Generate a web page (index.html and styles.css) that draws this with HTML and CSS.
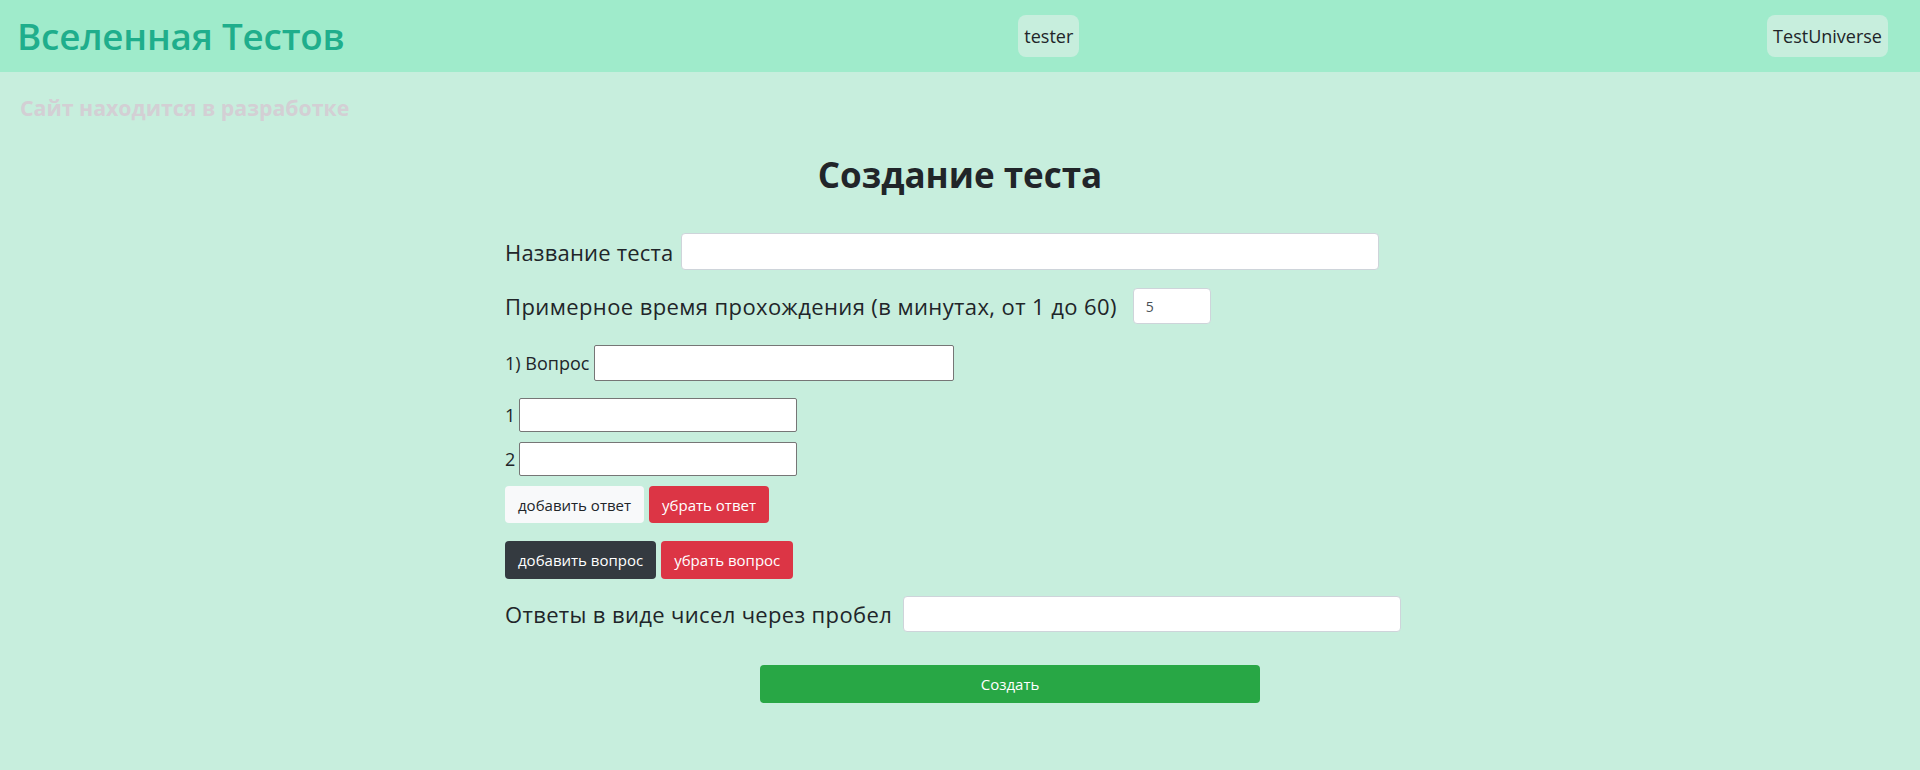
FILE: index.html
```html
<!DOCTYPE html>
<html lang="ru">
<head>
<meta charset="utf-8">
<title>Вселенная Тестов</title>
<link rel="stylesheet" href="styles.css">
</head>
<body>
<header class="topbar">
  <div class="logo">Вселенная Тестов</div>
  <a class="nav-btn nav-user">tester</a>
  <a class="nav-btn nav-home">TestUniverse</a>
</header>
<main class="page">
  <div class="notice">Сайт находится в разработке</div>
  <h2 class="title">Создание теста</h2>
  <form class="test-form">
    <div class="row name-row">
      <label class="big-label">Название теста</label>
      <input class="form-control name-input" type="text">
    </div>
    <div class="row time-row">
      <label class="big-label">Примерное время прохождения (в минутах, от 1 до 60)</label>
      <input class="form-control time-input" type="text" value="5">
    </div>
    <div class="row question-row">
      <label class="small-label">1) Вопрос</label>
      <input class="plain-input question-input" type="text">
    </div>
    <div class="answers">
      <div class="answer-row">
        <span class="small-label num">1</span>
        <input class="plain-input answer-input" type="text">
      </div>
      <div class="answer-row">
        <span class="small-label num">2</span>
        <input class="plain-input answer-input" type="text">
      </div>
    </div>
    <div class="btn-row answers-btns">
      <button type="button" class="btn btn-light">добавить ответ</button>
      <button type="button" class="btn btn-danger">убрать ответ</button>
    </div>
    <div class="btn-row question-btns">
      <button type="button" class="btn btn-dark">добавить вопрос</button>
      <button type="button" class="btn btn-danger">убрать вопрос</button>
    </div>
    <div class="row key-row">
      <label class="big-label">Ответы в виде чисел через пробел</label>
      <input class="form-control key-input" type="text">
    </div>
    <div class="submit-row">
      <button type="button" class="btn btn-success submit">Создать</button>
    </div>
  </form>
</main>
</body>
</html>
```
FILE: styles.css
```css
* { box-sizing: border-box; }
html, body { margin: 0; padding: 0; }
body {
  font-family: "Open Sans", "Noto Sans", sans-serif;
  font-size: 16px;
  color: #212529;
  background: #c7eedd;
  min-height: 770px;
}
.topbar {
  height: 72px;
  background: #9febcb;
  display: flex;
  align-items: center;
  justify-content: space-between;
  padding: 0 32px 0 17px;
}
.logo {
  font-size: 36.8px;
  font-weight: 600;
  color: #1fae8c;
  letter-spacing: -0.2px;
}
.nav-btn {
  display: inline-block;
  background: #c7eedd;
  border-radius: 8px;
  height: 42px;
  line-height: 42px;
  padding: 0 6px;
  font-size: 18px;
  color: #212529;
}
.nav-user { margin-right: 14px; }
.notice {
  font-size: 21.3px;
  font-weight: 700;
  color: #d3cfd4;
  padding: 21px 0 0 20px;
  line-height: 30px;
}
.title {
  text-align: center;
  font-size: 35px;
  font-weight: 700;
  margin: 30px 0 36px;
  line-height: 44px;
}
.test-form {
  width: 910px;
  margin: 0 auto;
}
.row {
  display: flex;
  align-items: center;
}
.big-label {
  font-size: 22px;
  letter-spacing: 0.2px;
  line-height: 30px;
}
.form-control {
  background: #fff;
  border: 1px solid #ced4da;
  border-radius: 4px;
  padding: 6px 12px;
  font-size: 14px;
  color: #495057;
  font-family: inherit;
}
.name-row .big-label { margin-right: 7px; }
.name-input { width: 698px; height: 37px; }
.time-row { margin-top: 18px; }
.time-row .big-label { margin-right: 16px; letter-spacing: 0.4px; }
.time-input { width: 78px; height: 36px; }
.question-row { margin-top: 21px; }
.small-label { font-size: 18px; margin-right: 5px; line-height: 24px; }
.num { margin-right: 4px; }
.plain-input {
  background: #fff;
  border: 1px solid #767676;
  border-radius: 2px;
  font-family: inherit;
}
.question-input { width: 360px; height: 36px; }
.answers { margin-top: 17px; }
.answer-row { display: flex; align-items: center; }
.answer-row + .answer-row { margin-top: 10px; }
.answer-input { width: 278px; height: 34px; }
.btn-row { display: flex; gap: 5px; }
.answers-btns { margin-top: 10px; }
.question-btns { margin-top: 18px; }
.btn {
  font-family: inherit;
  font-size: 15px;
  height: 37px;
  padding: 0 12px;
  border: 1px solid transparent;
  border-radius: 4px;
}
.btn-light { background: #f8f9fa; color: #212529; }
.btn-danger { background: #dc3545; color: #fff; }
.btn-dark { background: #343a40; color: #fff; }
.question-btns .btn { height: 38px; }
.key-row { margin-top: 17px; }
.key-row .big-label { margin-right: 11px; letter-spacing: 0.35px; }
.key-input { width: 498px; height: 36px; }
.submit-row { margin-top: 33px; padding-left: 255px; }
.submit { width: 500px; height: 38px; background: #28a745; color: #fff; }
```
